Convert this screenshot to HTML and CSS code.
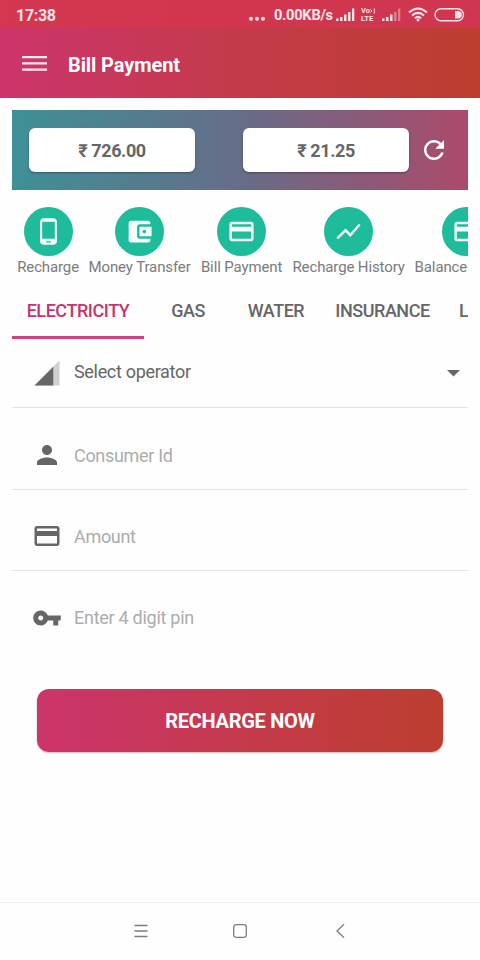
FILE: index.html
```html
<!DOCTYPE html>
<html lang="en">
<head>
<meta charset="utf-8">
<title>Bill Payment</title>
<link rel="stylesheet" href="styles.css">
</head>
<body>
<div class="status">
  <span class="clock">17:38</span>
  <svg class="dots" width="18" height="28" viewBox="0 0 18 28"><circle cx="3" cy="18.700" r="2"/><circle cx="9" cy="18.700" r="2"/><circle cx="15" cy="18.700" r="2"/></svg>
  <span class="speed">0.00KB/s</span>
  <svg class="signal" width="19" height="28" viewBox="0 0 19 28"><path d="M0 18.500h2.500V21H0zM4 17h2.500v4H4zM8 14.500h2.500V21H8zM12 12h2.500v9H12zM16 8.500h2.300V21H16z"/></svg>
  <div class="volte">
    <span>Vo<svg width="5" height="6" viewBox="0 0 5 6"><path d="M.500 1.500L2 3 .500 4.500M4.300.500v5" fill="none" stroke="currentColor"/></svg></span>
    <span>LTE</span>
  </div>
  <svg class="signal second" width="19" height="28" viewBox="0 0 19 28"><path d="M0 18.500h2.500V21H0zM4 17h2.500v4H4zM8 14.500h2.500V21H8z"/><path opacity=".4" d="M12 12h2.500v9H12zM16 8.500h2.300V21H16z"/></svg>
  <svg class="wifi" width="20" height="28" viewBox="0 0 20 28"><g fill="none" stroke="currentColor" stroke-width="2"><path d="M1 12.500Q10 4.500 19 12.500M4 15.500Q10 10.200 16 15.500M6.800 18.200Q10 15.600 13.200 18.200"/></g><circle cx="10" cy="20" r="1.500"/></svg>
  <svg class="battery" width="31" height="28" viewBox="0 0 31 28"><rect x="1" y="8.800" width="28.500" height="12" rx="6" fill="none" stroke="currentColor" stroke-width="1.400"/><path d="M21 11h3a3.800 3.800 0 0 1 0 7.600h-3z"/></svg>
</div>
<header class="appbar">
  <svg width="26" height="16" viewBox="0 0 26 16"><path d="M0 0h25v2.200H0zM0 6.300h25v2.200H0zM0 12.600h25v2.200H0z"/></svg>
  <h1>Bill Payment</h1>
</header>
<main>
  <section class="balance">
    <div class="amount">₹ 726.00</div>
    <div class="amount">₹ 21.25</div>
    <svg class="refresh" width="30" height="30" viewBox="0 0 24 24"><path d="M17.650 6.350C16.200 4.900 14.210 4 12 4c-4.420 0-7.990 3.580-7.990 8s3.570 8 7.990 8c3.730 0 6.840-2.550 7.730-6h-2.080c-.82 2.330-3.040 4-5.650 4-3.310 0-6-2.690-6-6s2.690-6 6-6c1.660 0 3.140.69 4.220 1.780L13 11h7V4l-2.350 2.350z"/></svg>
  </section>
  <nav class="shortcuts">
    <a class="s1"><b><svg viewBox="0 0 24 24"><path d="M16 1H8C6.340 1 5 2.340 5 4v16c0 1.660 1.340 3 3 3h8c1.660 0 3-1.340 3-3V4c0-1.660-1.340-3-3-3zm-2 20h-4v-1h4v1zm3.250-3H6.750V4h10.500v14z"/></svg></b><span>Recharge</span></a>
    <a class="s2"><b><svg viewBox="0 0 24 24"><path d="M21 18v1c0 1.100-.9 2-2 2H5c-1.110 0-2-.9-2-2V5c0-1.100.89-2 2-2h14c1.100 0 2 .9 2 2v1h-9c-1.110 0-2 .9-2 2v8c0 1.100.89 2 2 2h9zm-9-2h10V8H12v8zm4-2.500c-.83 0-1.500-.67-1.500-1.500s.67-1.500 1.500-1.500 1.500.67 1.500 1.500-.67 1.500-1.500 1.500z"/></svg></b><span>Money Transfer</span></a>
    <a class="s3"><b><svg viewBox="0 0 24 24"><path d="M20 4H4c-1.110 0-1.990.89-1.990 2L2 18c0 1.110.89 2 2 2h16c1.110 0 2-.89 2-2V6c0-1.110-.89-2-2-2zm0 14H4v-6h16v6zm0-10H4V6h16v2z"/></svg></b><span>Bill Payment</span></a>
    <a class="s4"><b><svg viewBox="0 0 24 24"><path d="M3.500 18.490l6-6.010 4 4L22 6.920l-1.410-1.410-7.090 7.970-4-4L2 16.990z"/></svg></b><span>Recharge History</span></a>
    <a class="s5"><b><svg viewBox="0 0 24 24"><path d="M20 4H4c-1.110 0-1.990.89-1.990 2L2 18c0 1.110.89 2 2 2h16c1.110 0 2-.89 2-2V6c0-1.110-.89-2-2-2zm0 14H4v-6h16v6zm0-10H4V6h16v2z"/></svg></b><span>Balance</span></a>
  </nav>
  <nav class="tabs">
    <a class="electricity active">ELECTRICITY</a><a class="gas">GAS</a><a class="water">WATER</a><a class="insurance">INSURANCE</a><a class="more">L</a>
  </nav>
  <form>
    <div class="field operator">
      <svg class="icon" viewBox="0 0 24 24"><path opacity=".3" d="M2 22h20V2z"/><path d="M17 7L2 22h15z"/></svg>
      <span>Select operator</span>
      <svg class="caret" width="13" height="7" viewBox="0 0 13 7"><path d="M0 0h13L6.500 6.500z"/></svg>
    </div>
    <div class="field">
      <svg class="icon" viewBox="0 0 24 24"><path d="M12 12c2.210 0 4-1.790 4-4s-1.790-4-4-4-4 1.790-4 4 1.790 4 4 4zm0 2c-2.670 0-8 1.340-8 4v2h16v-2c0-2.660-5.330-4-8-4z"/></svg>
      <span>Consumer Id</span>
    </div>
    <div class="field raised">
      <svg class="icon" viewBox="0 0 24 24"><path d="M20 4H4c-1.110 0-1.990.89-1.990 2L2 18c0 1.110.89 2 2 2h16c1.110 0 2-.89 2-2V6c0-1.110-.89-2-2-2zm0 14H4v-6h16v6zm0-10H4V6h16v2z"/></svg>
      <span>Amount</span>
    </div>
    <div class="field raised pin">
      <svg class="icon" viewBox="0 0 24 24"><path d="M12.650 10C11.830 7.670 9.610 6 7 6c-3.310 0-6 2.690-6 6s2.690 6 6 6c2.610 0 4.830-1.670 5.650-4H17v4h4v-4h2v-4H12.650zM7 14c-1.100 0-2-.9-2-2s.9-2 2-2 2 .9 2 2-.9 2-2 2z"/></svg>
      <span>Enter 4 digit pin</span>
    </div>
    <button type="button">RECHARGE NOW</button>
  </form>
</main>
<footer>
  <svg width="14" height="14" viewBox="0 0 14 14"><path d="M.500 1.500h13M.500 7h13M.500 12.500h13"/></svg>
  <svg width="14" height="14" viewBox="0 0 14 14"><rect x=".7" y=".7" width="12.600" height="12.600" rx="2.500"/></svg>
  <svg width="14" height="14" viewBox="0 0 14 14"><path d="M12 .300L5 7l7 6.700"/></svg>
</footer>
</body>
</html>
```

FILE: styles.css
```css
* { box-sizing: border-box; }
body {
  margin: 0;
  width: 480px;
  height: 960px;
  display: flex;
  flex-direction: column;
  overflow: hidden;
  background: #fefefe;
  font-family: Roboto, "Noto Sans", sans-serif;
  color: #666;
}
svg { display: block; flex: none; fill: currentColor; }
.status {
  height: 28px;
  display: flex;
  align-items: center;
  padding: 0 15px 0 16px;
  background: linear-gradient(90deg, #d4374f, #d0364f);
  color: #ffe3e9;
  white-space: nowrap;
}
.clock { font-size: 16px; font-weight: 700; line-height: 28px; padding-top: 3px; letter-spacing: -.3px; }
.dots { margin-left: auto; }
.speed { width: 58px; margin: 2px 4px 0 8px; font-size: 14.6px; font-weight: 700; letter-spacing: -.25px; }
.volte { width: 16px; margin: 1px 5px 0 6px; font-size: 7.5px; line-height: 8px; font-weight: 700; }
.volte span { display: flex; align-items: center; height: 8px; letter-spacing: .1px; }
.appbar {
  height: 70px;
  display: flex;
  align-items: center;
  gap: 20px;
  padding: 2px 22px 0;
  background: linear-gradient(90deg, #cc356c, #c43a49 50%, #bc3e2f);
  color: #ffeaf0;
}
.second { margin-right: 7px; }
.wifi { margin-right: 6px; }
h1 { margin: 1px 0 0; font-size: 20px; line-height: 24px; font-weight: 700; letter-spacing: -.1px; color: #fff; }
main { flex: 1; padding: 12px 12px 0; min-width: 0; }
.balance {
  height: 80px;
  display: flex;
  align-items: center;
  padding: 0 17px;
  background: linear-gradient(90deg, #3e9097, #666d88 50%, #ac4a6b);
}
.amount {
  width: 166px;
  height: 44px;
  flex: none;
  border-radius: 6px;
  background: #fff;
  box-shadow: 0 1px 2px #0005;
  text-align: center;
  font-size: 18px;
  line-height: 46px;
  font-weight: 700;
  letter-spacing: -.4px;
}
.amount + .amount { margin-left: 48px; }
.refresh { margin-left: 10px; color: #fff; }
.shortcuts { height: 92px; display: flex; gap: 10px; padding: 17px 0 0 5.6px; overflow: hidden; }
.shortcuts a { flex: none; display: flex; flex-direction: column; align-items: center; white-space: nowrap; font-size: 15px; line-height: 18px; letter-spacing: -.12px; color: #7b7b7b; }
.shortcuts span { padding-top: 2px; }
.shortcuts b { width: 49px; height: 49px; display: grid; place-items: center; border-radius: 50%; background: #1fbc9c; color: #f4fffc; }
.shortcuts svg { width: 29px; height: 29px; }
.s1 { width: 61px; }
.s2 { width: 102px; }
.s3 { width: 82px; }
.s4 { width: 112px; }
.s5 { width: 103px; }
.shortcuts .s5 { align-items: flex-start; }
.s5 b { margin-left: 27px; }
.tabs { display: flex; height: 57px; overflow: hidden; }
.tabs a { flex: none; text-align: center; font-size: 18px; line-height: 57px; font-weight: 500; letter-spacing: -.45px; }
.electricity { width: 132px; }
.gas { width: 88px; }
.water { width: 88px; }
.insurance { width: 125px; }
.tabs .more { width: 38px; text-align: left; padding-left: 14px; }
.tabs .active { color: #c6346a; border-bottom: 3px solid #d04380; }
form { display: block; }
.field {
  height: 81.5px;
  display: flex;
  align-items: center;
  gap: 12px;
  padding: 14px 8px 0 20px;
  border-bottom: 1px solid #e4e4e4;
  font-size: 18px;
  line-height: 24px;
  letter-spacing: -.32px;
}
.field span { margin-top: 2px; color: #acacac; }
.icon { width: 30px; height: 30px; }
.raised { padding-top: 12px; }
.operator { height: 69px; padding-top: 0; }
.operator span { color: #666; margin-top: -2px; }
.caret { margin-left: auto; }
.pin { border: 0; }
.pin span { margin-top: 1px; letter-spacing: -.27px; }
button {
  display: block;
  width: 406px;
  height: 63px;
  margin: 36px 0 0 25px;
  padding: 2px 0 0;
  border: 0;
  border-radius: 12px;
  background: linear-gradient(90deg, #cc356c, #c43a49 55%, #bc3e2f);
  box-shadow: 0 1px 2px #0004;
  color: #fff;
  font: 700 20px/24px Roboto, sans-serif;
  letter-spacing: -.3px;
}
footer {
  height: 58px;
  display: flex;
  align-items: center;
  gap: 85px;
  padding: 0 0 2px 134px;
  border-top: 1px solid #eee;
}
footer svg { fill: none; stroke: #7d7d7d; stroke-width: 1.3; }
```
